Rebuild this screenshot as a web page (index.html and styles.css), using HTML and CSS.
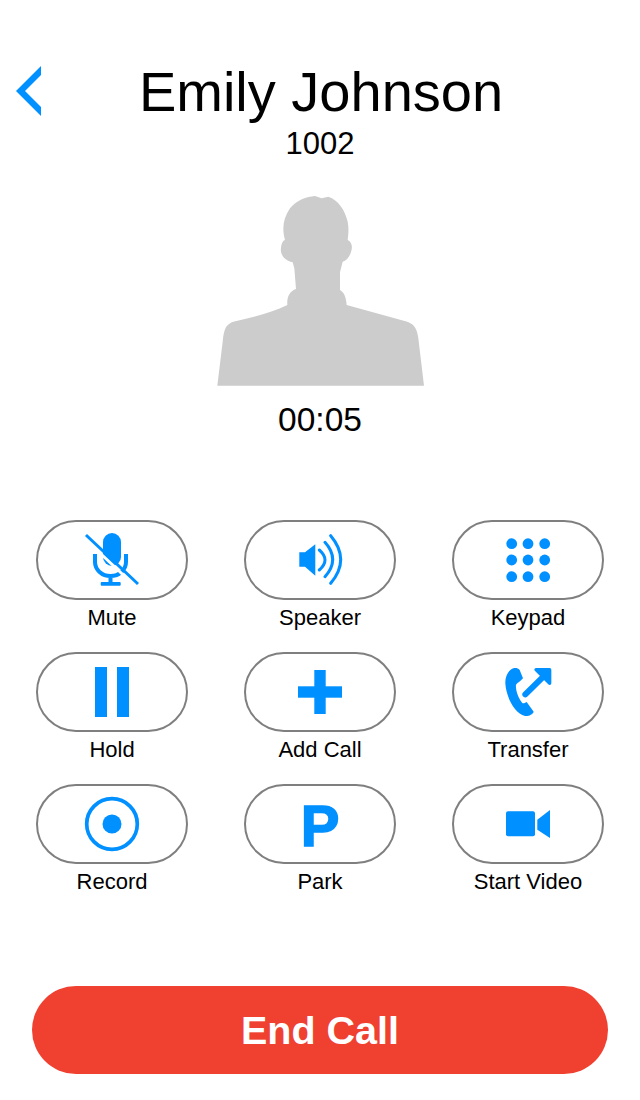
FILE: index.html
```html
<!DOCTYPE html>
<html lang="en">
<head>
    <meta charset="utf-8">
    <title>Call with Emily Johnson</title>
    <link rel="stylesheet" href="styles.css">
</head>
<body>
<main class="call">
    <header class="call-header">
        <svg class="back" viewBox="16 66 25 50" aria-label="Back">
            <polygon points="16,91 41,66 41,75 25,91 41,107 41,116" />
        </svg>
        <h1 class="name">Emily Johnson</h1>
    </header>
    <p class="extension">1002</p>
    <svg class="avatar" viewBox="0 0 720 630">
        <path d="M52 602 L68 470 C72 430 78 418 100 410 C160 398 215 382 262 360 C260 335 270 318 288 312 L283 250 L278 232 C250 226 240 205 243 188 C245 172 250 166 255 165 C245 130 250 100 270 70 C290 45 320 35 345 33 L365 40 L385 35 C415 45 435 75 443 110 C447 130 445 150 443 165 C455 170 458 185 454 197 C450 215 440 227 428 230 L420 262 L420 315 C432 322 438 335 440 360 L622 410 C645 418 652 435 655 460 L672 602 Z" />
    </svg>
    <p class="timer">00:05</p>

    <section class="controls">
        <div class="control">
            <button class="pill" type="button">
                <svg class="icon" viewBox="0 0 60 60">
                    <rect x="21" y="3" width="18" height="33" rx="9" />
                    <path class="line" d="M13 24 V32 A15.5 14 0 0 0 44 32 V24 M28.5 46 V54" />
                    <rect x="18.7" y="52" width="20" height="3.7" rx="1" />
                    <path class="gap" d="M2 8 L54 57" />
                    <path class="line thin" d="M4 5 L56 54" />
                </svg>
            </button>
            <span class="label">Mute</span>
        </div>
        <div class="control">
            <button class="pill" type="button">
                <svg class="icon" viewBox="0 0 60 60">
                    <polygon points="9.3,22.3 15,22.3 25.3,14.3 25.3,45.7 15,36.7 9.3,36.7" />
                    <path class="line round" d="M29.3 20 Q40.7 30 29.3 40 M35 12.3 Q50.4 29.5 35 46.7 M40.7 5.7 Q60.7 29.5 40.7 53.3" />
                </svg>
            </button>
            <span class="label">Speaker</span>
        </div>
        <div class="control">
            <button class="pill" type="button">
                <svg class="icon" viewBox="0 0 60 60">
                    <circle cx="13.7" cy="13.7" r="5.4" />
                    <circle cx="30" cy="13.7" r="5.4" />
                    <circle cx="46.7" cy="13.7" r="5.4" />
                    <circle cx="13.7" cy="30" r="5.4" />
                    <circle cx="30" cy="30" r="5.4" />
                    <circle cx="46.7" cy="30" r="5.4" />
                    <circle cx="13.7" cy="46.7" r="5.4" />
                    <circle cx="30" cy="46.7" r="5.4" />
                    <circle cx="46.7" cy="46.7" r="5.4" />
                </svg>
            </button>
            <span class="label">Keypad</span>
        </div>

        <div class="control">
            <button class="pill" type="button">
                <svg class="icon" viewBox="0 0 60 60">
                    <rect x="13" y="5" width="12" height="50" />
                    <rect x="35" y="5" width="12" height="50" />
                </svg>
            </button>
            <span class="label">Hold</span>
        </div>
        <div class="control">
            <button class="pill" type="button">
                <svg class="icon" viewBox="0 0 60 60">
                    <rect x="8" y="24.3" width="44" height="11.4" />
                    <rect x="24.3" y="8" width="11.4" height="44" />
                </svg>
            </button>
            <span class="label">Add Call</span>
        </div>
        <div class="control">
            <button class="pill" type="button">
                <svg class="icon" viewBox="159 51 180 180">
                    <path d="M205 70 C189 76 180 95 181 115 C183 155 208 205 240 213 C252 214 263 208 266 200 L245 171 C239 174 235 176 232 174 C220 160 211 135 213 119 C218 113 228 108 234 100 L224 75 C219 69 211 68 205 70 Z" />
                    <path class="line arrow" d="M241 148 L292 98" />
                    <polygon class="arrow-head" points="273,74 314,74 314,115" />
                </svg>
            </button>
            <span class="label">Transfer</span>
        </div>

        <div class="control">
            <button class="pill" type="button">
                <svg class="icon" viewBox="0 0 60 60">
                    <circle class="line ring" cx="30" cy="30" r="25.3" />
                    <circle cx="30" cy="30" r="9.5" />
                </svg>
            </button>
            <span class="label">Record</span>
        </div>
        <div class="control">
            <button class="pill" type="button">
                <span class="park">P</span>
            </button>
            <span class="label">Park</span>
        </div>
        <div class="control">
            <button class="pill" type="button">
                <svg class="icon" viewBox="0 0 60 60">
                    <rect x="8" y="17.3" width="29" height="25" rx="2" />
                    <polygon points="39.3,25.7 52,16 52,44 39.3,35.7" />
                </svg>
            </button>
            <span class="label">Start Video</span>
        </div>
    </section>

    <button class="end-call" type="button">End Call</button>
</main>
</body>
</html>
```

FILE: styles.css
```css
/* Page */
body {
    margin: 0;
    background: #fff;
    color: #000;
    font-family: "Liberation Sans", Arial, sans-serif;
}
.call {
    display: flex;
    flex-direction: column;
    align-items: center;
    padding-top: 60px;
}

/* Header */
.call-header {
    display: grid;
    grid-template-columns: 1fr auto 1fr;
    align-items: start;
    width: 100%;
}
.back {
    width: 25px;
    height: 50px;
    margin: 6px 0 0 16px;
    fill: #0090ff;
}
.name {
    margin: 0;
    padding-left: 2px;
    font-size: 56px;
    font-weight: normal;
    line-height: 64px;
}
.extension {
    margin: 2px 0 0;
    font-size: 31px;
    line-height: 36px;
}
.avatar {
    width: 240px;
    height: 210px;
    margin-top: 23px;
    fill: #ccc;
}
.timer {
    margin: 5px 0 0;
    font-size: 33.5px;
    line-height: 40px;
}

/* Control buttons */
.controls {
    display: grid;
    grid-template-columns: repeat(3, 152px);
    column-gap: 56px;
    row-gap: 16px;
    margin-top: 80px;
}
.control {
    display: flex;
    flex-direction: column;
    align-items: center;
}
.pill {
    display: flex;
    align-items: center;
    justify-content: center;
    width: 152px;
    height: 80px;
    padding: 0;
    background: #fff;
    border: 2px solid #7f7f7f;
    border-radius: 40px;
}
.icon {
    width: 60px;
    height: 60px;
    fill: #0090ff;
}
.label {
    font-size: 22px;
    line-height: 36px;
}
.park {
    padding-top: 3px;
    color: #0090ff;
    font-size: 58px;
    font-weight: bold;
    line-height: 60px;
    -webkit-text-stroke: 1.5px #0090ff;
}

/* Icon strokes */
.line {
    fill: none;
    stroke: #0090ff;
    stroke-width: 4px;
}
.line.thin {
    stroke-width: 3px;
}
.line.round {
    stroke-width: 3px;
    stroke-linecap: round;
}
.line.ring {
    stroke-width: 3.7px;
}
.line.arrow {
    stroke-width: 18px;
    stroke-linecap: round;
}
.gap {
    fill: none;
    stroke: #fff;
    stroke-width: 3px;
}
.arrow-head {
    stroke: #0090ff;
    stroke-width: 10px;
    stroke-linejoin: round;
}

/* End call */
.end-call {
    align-self: stretch;
    height: 88px;
    margin: 86px 32px 0;
    background: #f04030;
    border: 0;
    border-radius: 44px;
    color: #fff;
    font-family: inherit;
    font-size: 39.5px;
    font-weight: bold;
}
```
